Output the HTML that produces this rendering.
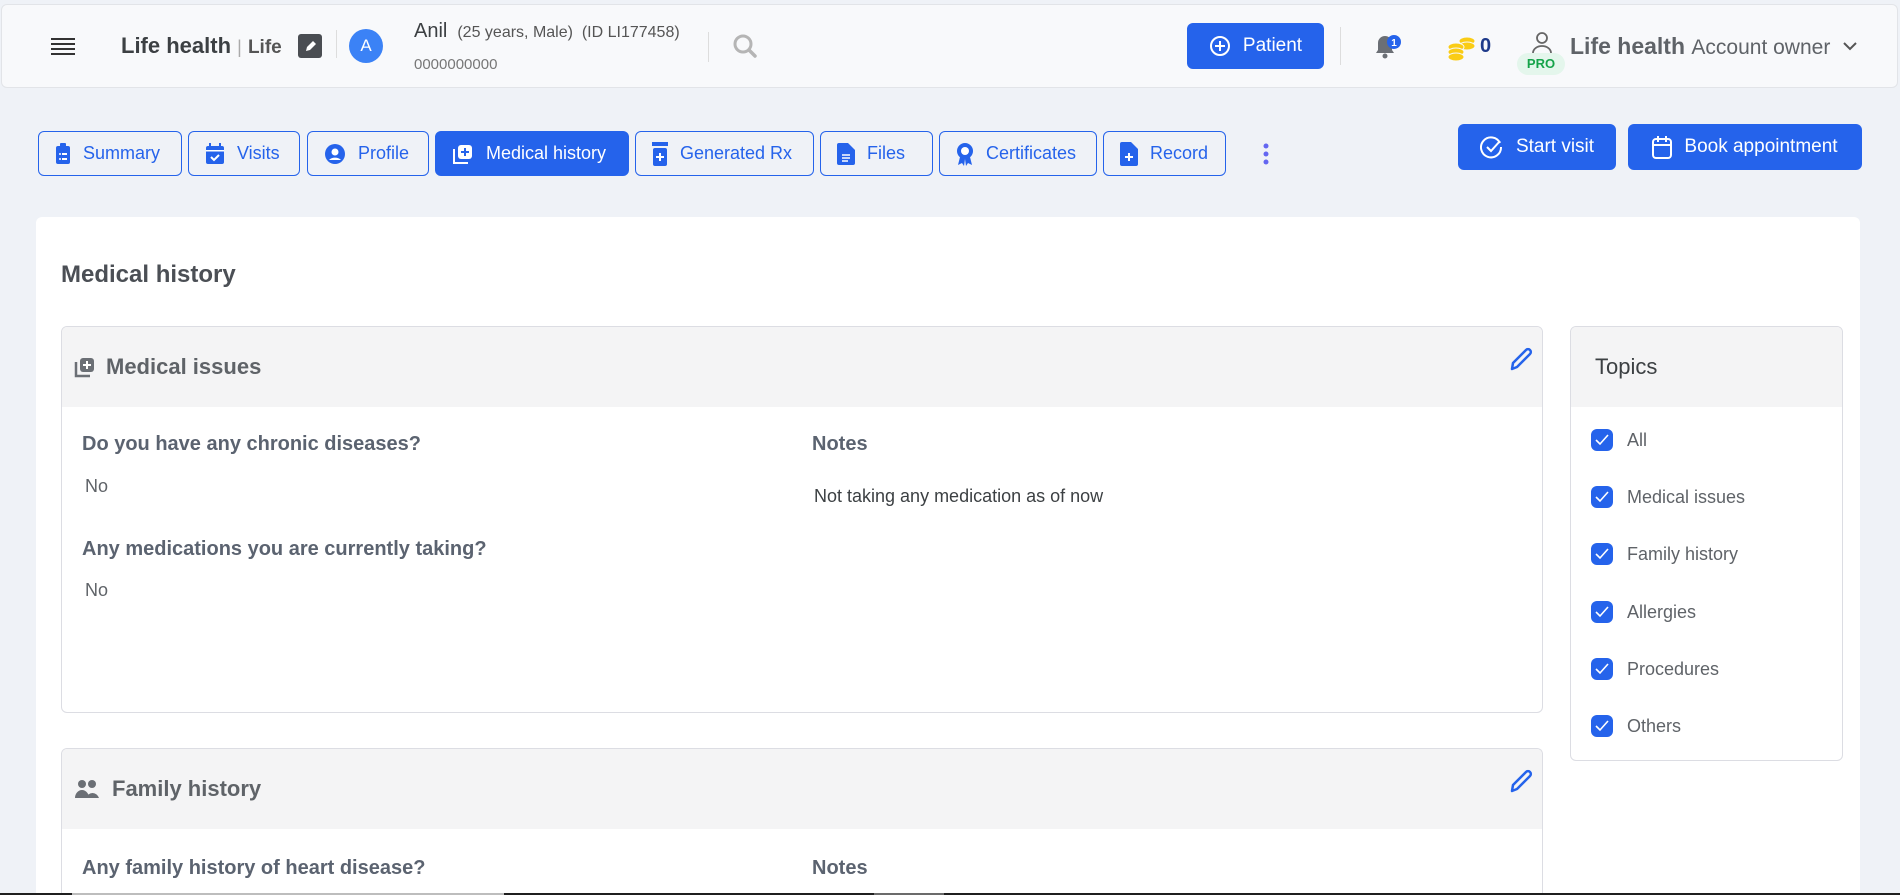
<!DOCTYPE html>
<html><head><meta charset="utf-8"><style>
*{box-sizing:border-box;margin:0;padding:0}
html{width:1900px;height:895px;overflow:hidden}
body{width:1900px;height:895px;overflow:hidden;background:#eff2f7;font-family:"Liberation Sans",sans-serif;position:relative;color:#5f6368}
.a{position:absolute;white-space:nowrap}
.hdr{left:1px;top:4px;width:1897px;height:84px;background:#f8f9fb;border:1px solid #e2e4e8;border-radius:6px}
.tab{position:absolute;top:131px;height:45px;border:1.5px solid #2563eb;border-radius:6px;color:#2563eb;font-size:18px;display:flex;align-items:center;padding-left:16px;gap:12px;background:#eff2f7}
.tab.on{background:#2563eb;color:#fff}
.btn{position:absolute;background:#2563eb;color:#fff;border-radius:6px;font-size:19px;display:flex;align-items:center;justify-content:center;gap:12px}
.card{left:36px;top:217px;width:1824px;height:678px;background:#fff;border-radius:6px 6px 0 0}
.pnl{border:1px solid #dcdde3;border-radius:6px;background:#fff;overflow:hidden}
.ph{height:80px;background:#f4f4f5;display:flex;align-items:center;font-size:22px;font-weight:bold;color:#5f6368}
.q{font-size:20px;font-weight:bold;color:#5b6370}
.ans{font-size:18px;color:#5f6368}
.ck{position:absolute;left:1591px;width:22px;height:22px;border-radius:6px;background:#2563eb}
.ck svg{position:absolute;left:4px;top:5px}
.tl{position:absolute;left:1627px;font-size:18px;color:#5f6368}
</style></head><body>
<div class="a hdr"></div>
<svg class="a" style="left:51px;top:36px" width="24" height="20"><g stroke="#333" stroke-width="2"><line x1="0" y1="3" x2="24" y2="3"/><line x1="0" y1="8" x2="24" y2="8"/><line x1="0" y1="13" x2="24" y2="13"/><line x1="0" y1="18" x2="24" y2="18"/></g></svg>
<div class="a" style="left:121px;top:33px;font-size:22px;font-weight:bold;color:#3c4043">Life health <span style="font-weight:normal;color:#aaa;font-size:18px">|</span> <span style="font-size:19px;color:#555">Life</span></div>
<div class="a" style="left:298px;top:34px;width:24px;height:24px;background:#4a4d52;border-radius:3px"><svg width="24" height="24"><path d="M8 17l1-4 6-6 3 3-6 6z" fill="#fff"/></svg></div>
<div class="a" style="left:336px;top:30px;width:1px;height:28px;background:#ddd"></div>
<div class="a" style="left:349px;top:29px;width:34px;height:34px;border-radius:50%;background:#3b82f6;color:#fff;font-size:17px;text-align:center;line-height:34px">A</div>
<div class="a" style="left:414px;top:20px;font-size:20px;color:#3c4043">Anil <span style="font-size:16px;color:#555">&nbsp;(25 years, Male) &nbsp;(ID LI177458)</span></div>
<div class="a" style="left:414px;top:56px;font-size:15px;color:#777">0000000000</div>
<div class="a" style="left:708px;top:32px;width:1px;height:30px;background:#ddd"></div>
<svg class="a" style="left:732px;top:33px" width="26" height="26"><circle cx="11" cy="11" r="8" fill="none" stroke="#b5b5b5" stroke-width="3"/><line x1="17" y1="17" x2="23" y2="23" stroke="#b5b5b5" stroke-width="3.5" stroke-linecap="round"/></svg>
<div class="btn" style="left:1187px;top:23px;width:137px;height:46px"><svg width="22" height="22"><circle cx="11" cy="11" r="9" fill="none" stroke="#fff" stroke-width="2"/><path d="M11 6v10M6 11h10" stroke="#fff" stroke-width="2"/></svg>Patient</div>
<div class="a" style="left:1340px;top:27px;width:1px;height:38px;background:#ddd"></div>
<svg class="a" style="left:1372px;top:31px" width="30" height="30"><path d="M4 22h18l-2-3v-7a7 7 0 0 0-14 0v7z" fill="#6b6f75"/><circle cx="13" cy="25" r="2.5" fill="#6b6f75"/><circle cx="22" cy="11" r="7" fill="#2563eb"/><text x="22" y="15" font-size="10" fill="#fff" text-anchor="middle" font-family="Liberation Sans" font-weight="bold">1</text></svg>
<svg class="a" style="left:1446px;top:33px" width="32" height="28"><g fill="#facc15" stroke="#f8f9fb" stroke-width="1"><ellipse cx="21" cy="8" rx="8" ry="4"/><ellipse cx="21" cy="13" rx="8" ry="4"/><ellipse cx="10" cy="14" rx="8" ry="4"/><ellipse cx="10" cy="19" rx="8" ry="4"/><ellipse cx="10" cy="24" rx="8" ry="4"/></g></svg>
<div class="a" style="left:1480px;top:35px;font-size:20px;font-weight:bold;color:#1e3a8a">0</div>
<svg class="a" style="left:1530px;top:30px" width="24" height="28"><circle cx="12" cy="8" r="5" fill="none" stroke="#666" stroke-width="1.8"/><path d="M3 26v-3a9 7 0 0 1 18 0v3" fill="none" stroke="#666" stroke-width="1.8"/></svg>
<div class="a" style="left:1517px;top:53px;width:48px;height:22px;border-radius:11px;background:#e4f6ec;color:#16a34a;font-size:13px;font-weight:bold;text-align:center;line-height:22px">PRO</div>
<div class="a" style="left:1570px;top:33px;font-size:23px;color:#5f6368"><b>Life health</b> <span style="font-size:21px">Account owner</span></div>
<svg class="a" style="left:1842px;top:40px" width="16" height="12"><path d="M2 3l6 6 6-6" fill="none" stroke="#555" stroke-width="2"/></svg>

<div class="tab" style="left:38px;width:144px"><svg width="16" height="22"><rect x="1" y="3" width="14" height="18" rx="2" fill="#2563eb"/><rect x="5" y="0" width="6" height="5" rx="1" fill="#2563eb"/><g fill="#fff"><circle cx="5" cy="11" r="1"/><circle cx="5" cy="16" r="1"/><rect x="7" y="10" width="5" height="2"/><rect x="7" y="15" width="5" height="2"/></g></svg>Summary</div>
<div class="tab" style="left:188px;width:112px"><svg width="20" height="22"><rect x="1" y="3" width="18" height="18" rx="2" fill="#2563eb"/><rect x="4" y="0" width="2" height="5" fill="#2563eb"/><rect x="14" y="0" width="2" height="5" fill="#2563eb"/><rect x="1" y="7" width="18" height="1.5" fill="#fff"/><path d="M6 14l3 3 5-5" stroke="#fff" stroke-width="2" fill="none"/></svg>Visits</div>
<div class="tab" style="left:307px;width:122px"><svg width="22" height="22"><circle cx="11" cy="11" r="10" fill="#2563eb"/><circle cx="11" cy="9" r="3.5" fill="#fff"/><path d="M5 17a7 5 0 0 1 12 0" fill="#fff"/></svg>Profile</div>
<div class="tab on" style="left:435px;width:194px"><svg width="22" height="22"><path d="M2 6v14h14" fill="none" stroke="#fff" stroke-width="2"/><rect x="6" y="2" width="14" height="14" rx="3" fill="#fff"/><path d="M13 5v8M9 9h8" stroke="#2563eb" stroke-width="2"/></svg>Medical history</div>
<div class="tab" style="left:635px;width:179px"><svg width="16" height="24"><rect x="0" y="0" width="16" height="4" fill="#2563eb"/><rect x="1" y="6" width="14" height="18" rx="2" fill="#2563eb"/><path d="M8 11v8M4 15h8" stroke="#fff" stroke-width="2"/></svg>Generated Rx</div>
<div class="tab" style="left:820px;width:113px"><svg width="18" height="22"><path d="M0 2a2 2 0 0 1 2-2h9l7 7v13a2 2 0 0 1-2 2H2a2 2 0 0 1-2-2z" fill="#2563eb"/><g stroke="#fff" stroke-width="1.5"><line x1="5" y1="12" x2="13" y2="12"/><line x1="5" y1="15" x2="13" y2="15"/><line x1="5" y1="18" x2="11" y2="18"/></g></svg>Files</div>
<div class="tab" style="left:939px;width:158px"><svg width="18" height="24"><circle cx="9" cy="9" r="8" fill="#2563eb"/><circle cx="9" cy="9" r="4" fill="#fff"/><path d="M4 15l-2 8 4-2 2 3 1-7zM14 15l2 8-4-2-2 3-1-7z" fill="#2563eb"/></svg>Certificates</div>
<div class="tab" style="left:1103px;width:123px"><svg width="18" height="24"><path d="M0 2a2 2 0 0 1 2-2h9l7 7v15a2 2 0 0 1-2 2H2a2 2 0 0 1-2-2z" fill="#2563eb"/><path d="M9 11v8M5 15h8" stroke="#fff" stroke-width="2"/></svg>Record</div>
<svg class="a" style="left:1262px;top:142px" width="8" height="24"><g fill="#6366f1"><circle cx="4" cy="4" r="2.5"/><circle cx="4" cy="12" r="2.5"/><circle cx="4" cy="20" r="2.5"/></g></svg>
<div class="btn" style="left:1458px;top:124px;width:158px;height:46px"><svg width="24" height="24"><path d="M20 8A10 10 0 1 0 21 12" fill="none" stroke="#fff" stroke-width="2"/><path d="M7 12l4 4 9-10" fill="none" stroke="#fff" stroke-width="2"/></svg>Start visit</div>
<div class="btn" style="left:1628px;top:124px;width:234px;height:46px"><svg width="20" height="24"><rect x="1" y="4" width="18" height="19" rx="3" fill="none" stroke="#fff" stroke-width="2"/><path d="M1 10h18M6 1v6M14 1v6" stroke="#fff" stroke-width="2"/></svg>Book appointment</div>

<div class="a card"></div>
<div class="a" style="left:61px;top:261px;font-size:24px;font-weight:bold;color:#4b4f55">Medical history</div>

<div class="a pnl" style="left:61px;top:326px;width:1482px;height:387px">
 <div class="ph"><svg style="margin:0 10px 0 12px" width="22" height="22"><path d="M2 6v14h14" fill="none" stroke="#6b6f75" stroke-width="2.5"/><rect x="6" y="2" width="14" height="14" rx="3" fill="#6b6f75"/><path d="M13 5v8M9 9h8" stroke="#fff" stroke-width="2"/></svg>Medical issues</div>
 <svg class="a" style="left:1446px;top:20px" width="26" height="26"><path d="M4 22l1-6L18 3a2.5 2.5 0 0 1 4 4L9 20z" fill="none" stroke="#2563eb" stroke-width="2.5" stroke-linejoin="round"/></svg>
 <div class="a q" style="left:20px;top:106px">Do you have any chronic diseases?</div>
 <div class="a ans" style="left:23px;top:149px">No</div>
 <div class="a q" style="left:20px;top:211px">Any medications you are currently taking?</div>
 <div class="a ans" style="left:23px;top:253px">No</div>
 <div class="a q" style="left:750px;top:106px">Notes</div>
 <div class="a ans" style="left:752px;top:159px;color:#3c4043">Not taking any medication as of now</div>
</div>

<div class="a pnl" style="left:61px;top:748px;width:1482px;height:160px;border-bottom:none;border-radius:6px 6px 0 0">
 <div class="ph"><svg style="margin:0 12px 0 12px" width="26" height="22"><circle cx="8" cy="6" r="4" fill="#6b6f75"/><circle cx="18" cy="6" r="4" fill="#6b6f75"/><path d="M1 20a7 8 0 0 1 14 0zM12 20a7 8 0 0 1 13 0z" fill="#6b6f75"/></svg>Family history</div>
 <svg class="a" style="left:1446px;top:20px" width="26" height="26"><path d="M4 22l1-6L18 3a2.5 2.5 0 0 1 4 4L9 20z" fill="none" stroke="#2563eb" stroke-width="2.5" stroke-linejoin="round"/></svg>
 <div class="a q" style="left:20px;top:108px">Any family history of heart disease?</div>
 <div class="a q" style="left:750px;top:108px">Notes</div>
</div>

<div class="a pnl" style="left:1570px;top:326px;width:273px;height:435px">
 <div class="ph" style="font-weight:normal;color:#3c4043;padding-left:24px">Topics</div>
</div>
<div class="ck" style="top:429px"><svg width="14" height="12"><path d="M1 6l4 4 8-9" fill="none" stroke="#fff" stroke-width="1.6"/></svg></div><div class="tl" style="top:430px">All</div>
<div class="ck" style="top:486px"><svg width="14" height="12"><path d="M1 6l4 4 8-9" fill="none" stroke="#fff" stroke-width="1.6"/></svg></div><div class="tl" style="top:487px">Medical issues</div>
<div class="ck" style="top:543px"><svg width="14" height="12"><path d="M1 6l4 4 8-9" fill="none" stroke="#fff" stroke-width="1.6"/></svg></div><div class="tl" style="top:544px">Family history</div>
<div class="ck" style="top:601px"><svg width="14" height="12"><path d="M1 6l4 4 8-9" fill="none" stroke="#fff" stroke-width="1.6"/></svg></div><div class="tl" style="top:602px">Allergies</div>
<div class="ck" style="top:658px"><svg width="14" height="12"><path d="M1 6l4 4 8-9" fill="none" stroke="#fff" stroke-width="1.6"/></svg></div><div class="tl" style="top:659px">Procedures</div>
<div class="ck" style="top:715px"><svg width="14" height="12"><path d="M1 6l4 4 8-9" fill="none" stroke="#fff" stroke-width="1.6"/></svg></div><div class="tl" style="top:716px">Others</div>

<div class="a" style="left:0;top:893px;width:1900px;height:2px;background:#1f1f1f"></div>
<div class="a" style="left:72px;top:893px;width:432px;height:2px;background:#bdbdbd"></div>
<div class="a" style="left:874px;top:893px;width:70px;height:2px;background:#6b6b6b"></div>
</body></html>
